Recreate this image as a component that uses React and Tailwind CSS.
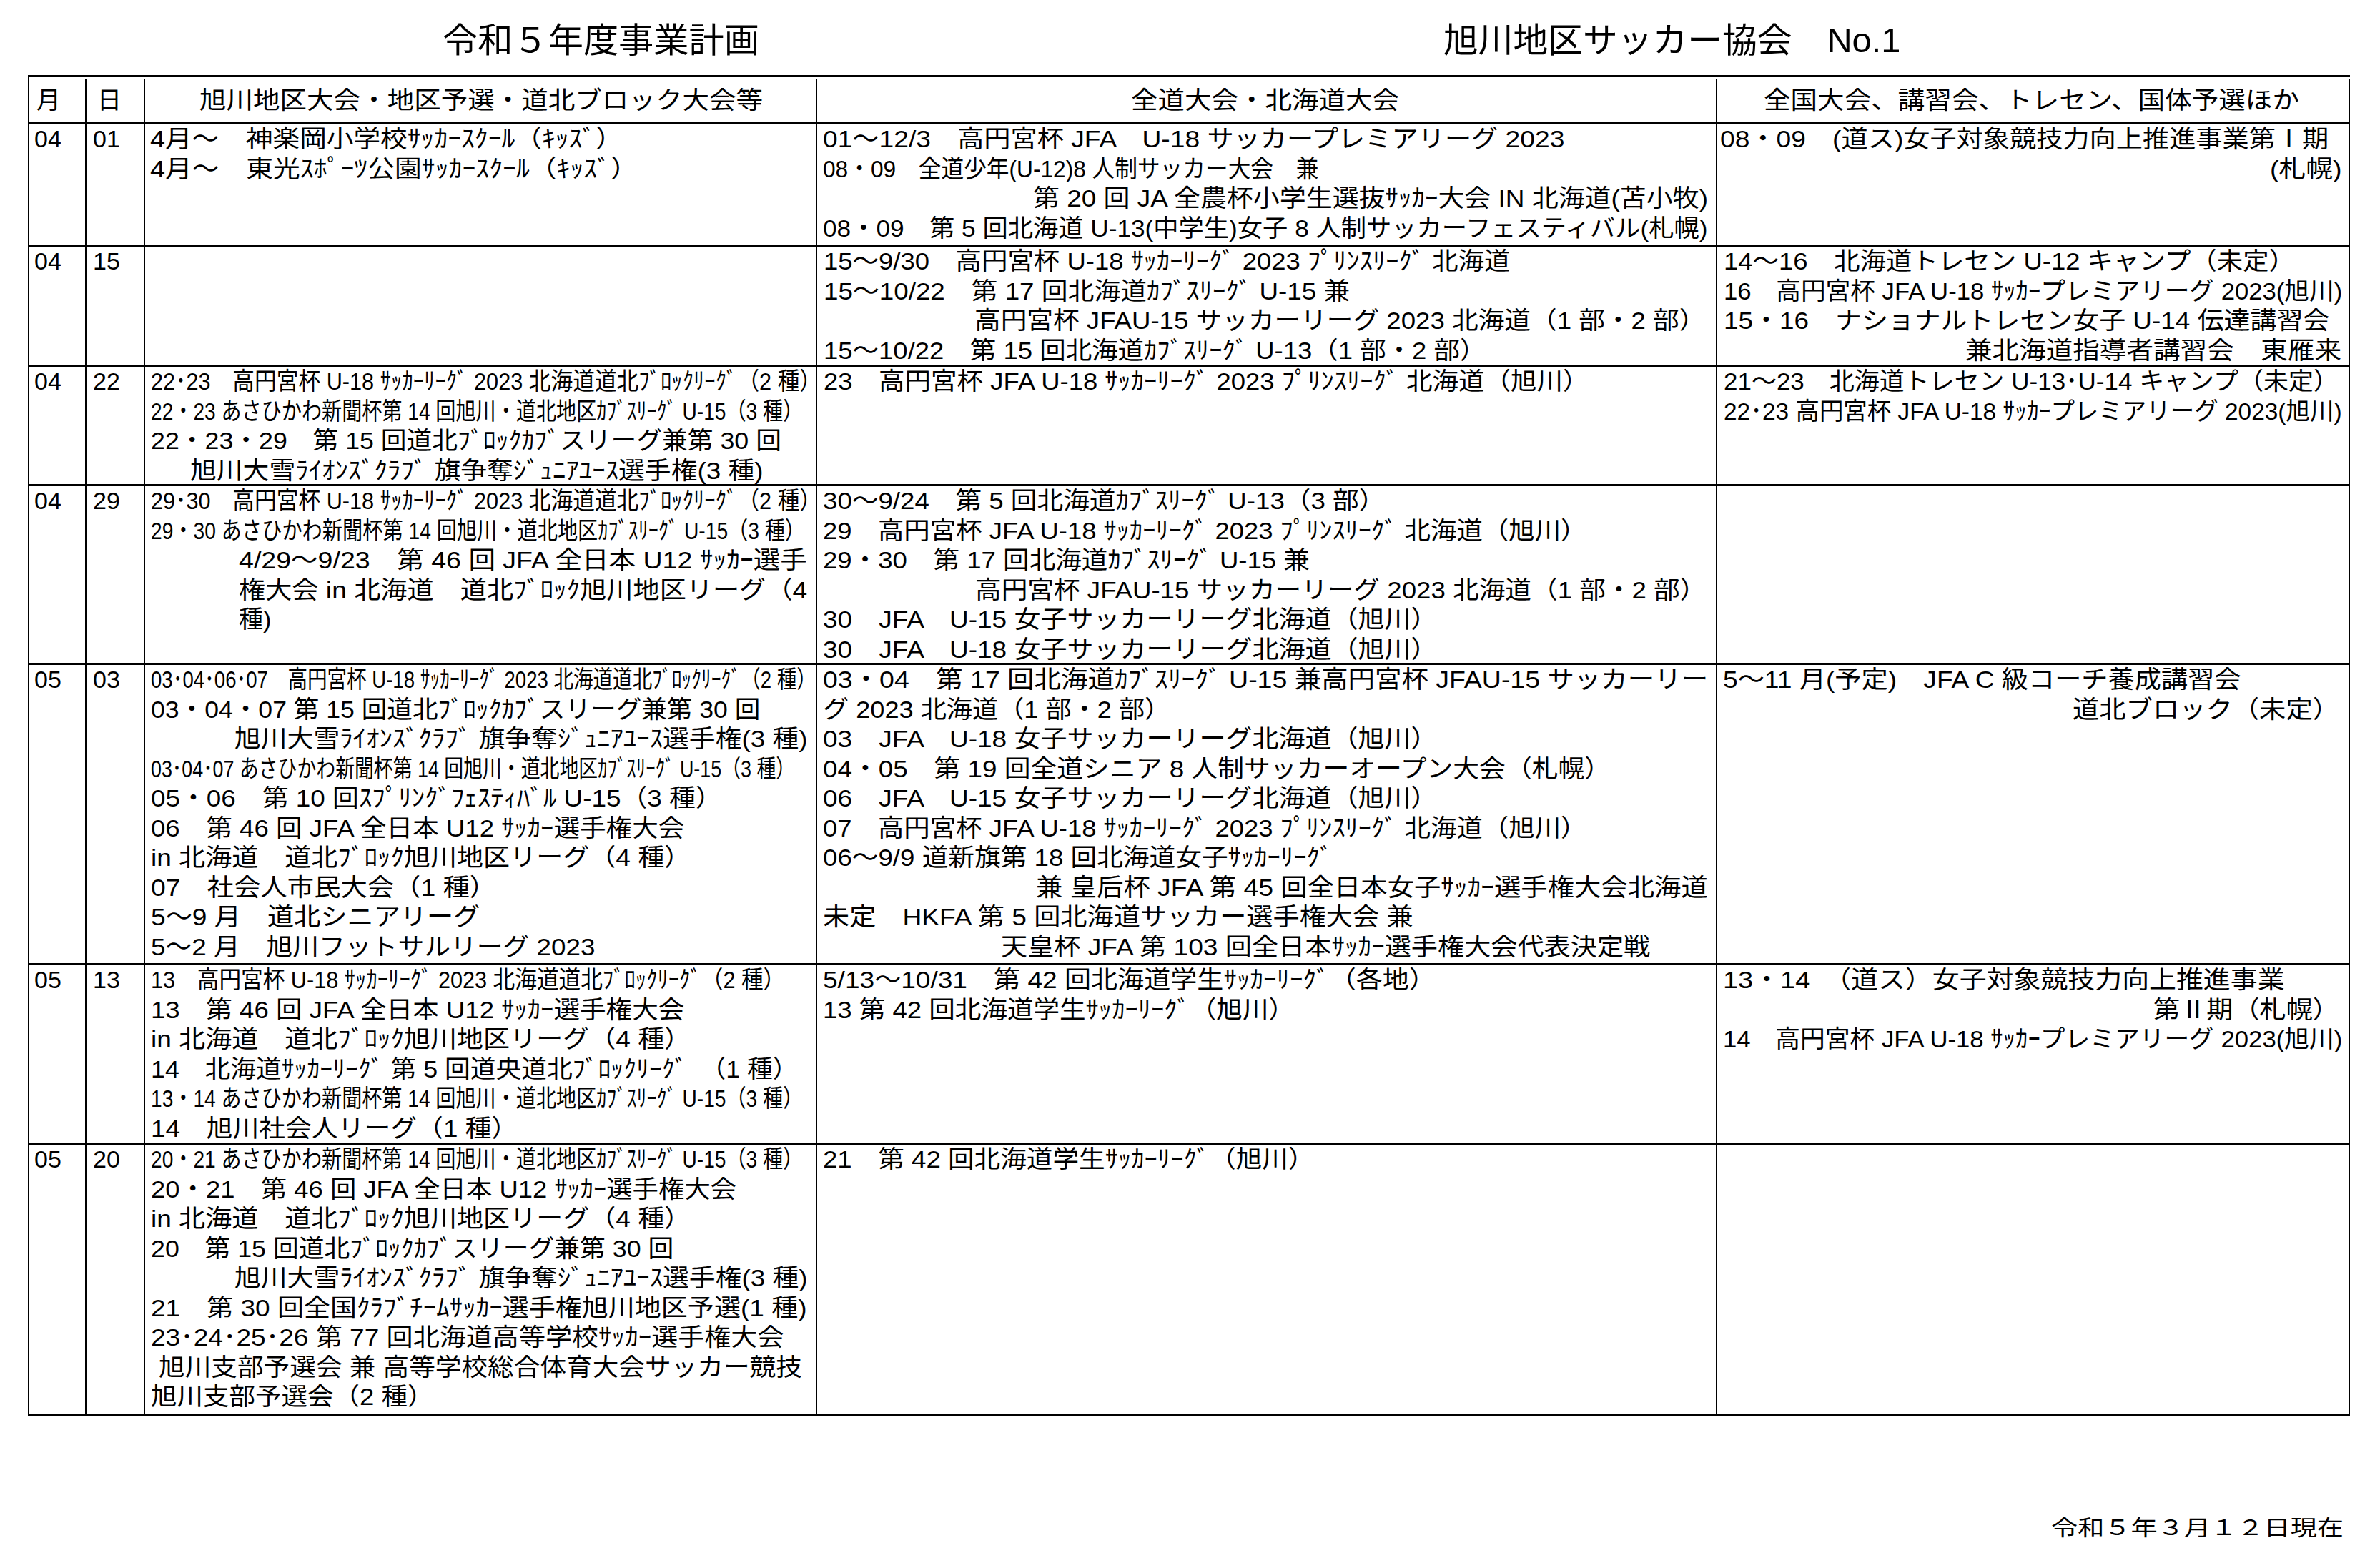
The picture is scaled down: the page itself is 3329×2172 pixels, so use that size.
import React, { useLayoutEffect, useRef, useState } from "react";

function Fit({ w, text, className = "" }) {
  const ref = useRef(null);
  const [s, setS] = useState(1);
  useLayoutEffect(() => {
    if (!w) return;
    const m = () => {
      const n = ref.current ? ref.current.offsetWidth : 0;
      if (n) setS(w / n);
    };
    m();
    if (document.fonts && document.fonts.ready) document.fonts.ready.then(m);
  }, [w, text]);
  return (
    <span
      ref={ref}
      className={"inline-block whitespace-nowrap origin-left " + className}
      style={{ transform: `scaleX(${s})` }}
    >
      {text}
    </span>
  );
}

function Line({ x0, x1, text, left }) {
  let w = null;
  if (x1 != null) {
    w = x1 - x0 + 2;
    if (text.endsWith("）")) w += 16;
  }
  return (
    <div
      className="h-[41.5px] leading-[41.5px] whitespace-nowrap"
      style={{ paddingLeft: x0 - left - 2 }}
    >
      <Fit w={w} text={text} />
    </div>
  );
}

const C3 = 203;
const C4 = 1143;
const C5 = 2402;

const rows = [
  {
    h: "h-[171px]",
    m: "04",
    d: "01",
    c3: [
      [212, 855, "4月～　神楽岡小学校ｻｯｶｰｽｸｰﾙ（ｷｯｽﾞ）"],
      [212, 876, "4月～　東光ｽﾎﾟｰﾂ公園ｻｯｶｰｽｸｰﾙ（ｷｯｽﾞ）"],
    ],
    c4: [
      [1153, 2188, "01～12/3　高円宮杯 JFA　U-18 サッカープレミアリーグ 2023"],
      [1153, 1844, "08・09　全道少年(U-12)8 人制サッカー大会　兼"],
      [1447, 2389, "第 20 回 JA 全農杯小学生選抜ｻｯｶｰ大会 IN 北海道(苫小牧)"],
      [1153, 2389, "08・09　第 5 回北海道 U-13(中学生)女子 8 人制サッカーフェスティバル(札幌)"],
    ],
    c5: [
      [2408, 3257, "08・09　(道ス)女子対象競技力向上推進事業第Ⅰ期"],
      [3177, 3276, "(札幌)"],
    ],
  },
  {
    h: "h-[168px]",
    m: "04",
    d: "15",
    c3: [],
    c4: [
      [1154, 2113, "15～9/30　高円宮杯 U-18 ｻｯｶｰﾘｰｸﾞ 2023 ﾌﾟﾘﾝｽﾘｰｸﾞ 北海道"],
      [1154, 1888, "15～10/22　第 17 回北海道ｶﾌﾞｽﾘｰｸﾞ U-15 兼"],
      [1365, 2369, "高円宮杯 JFAU-15 サッカーリーグ 2023 北海道（1 部・2 部）"],
      [1154, 2062, "15～10/22　第 15 回北海道ｶﾌﾞｽﾘｰｸﾞ U-13（1 部・2 部）"],
    ],
    c5: [
      [2413, 3194, "14～16　北海道トレセン U-12 キャンプ（未定）"],
      [2413, 3276, "16　高円宮杯 JFA U-18 ｻｯｶｰプレミアリーグ 2023(旭川)"],
      [2413, 3258, "15・16　ナショナルトレセン女子 U-14 伝達講習会"],
      [2751, 3275, "兼北海道指導者講習会　東雁来"],
    ],
  },
  {
    h: "h-[167px]",
    m: "04",
    d: "22",
    c3: [
      [213, 1133, "22･23　高円宮杯 U-18 ｻｯｶｰﾘｰｸﾞ 2023 北海道道北ﾌﾞﾛｯｸﾘｰｸﾞ（2 種）"],
      [213, 1107, "22・23 あさひかわ新聞杯第 14 回旭川・道北地区ｶﾌﾞｽﾘｰｸﾞ U-15（3 種）"],
      [213, 1093, "22・23・29　第 15 回道北ﾌﾞﾛｯｸｶﾌﾞスリーグ兼第 30 回"],
      [268, 1067, "旭川大雪ﾗｲｵﾝｽﾞｸﾗﾌﾞ 旗争奪ｼﾞｭﾆｱﾕｰｽ選手権(3 種)"],
    ],
    c4: [[1154, 2207, "23　高円宮杯 JFA U-18 ｻｯｶｰﾘｰｸﾞ 2023 ﾌﾟﾘﾝｽﾘｰｸﾞ 北海道（旭川）"]],
    c5: [
      [2413, 3255, "21～23　北海道トレセン U-13･U-14 キャンプ（未定）"],
      [2413, 3276, "22･23 高円宮杯 JFA U-18 ｻｯｶｰプレミアリーグ 2023(旭川)"],
    ],
  },
  {
    h: "h-[250px]",
    m: "04",
    d: "29",
    c3: [
      [213, 1133, "29･30　高円宮杯 U-18 ｻｯｶｰﾘｰｸﾞ 2023 北海道道北ﾌﾞﾛｯｸﾘｰｸﾞ（2 種）"],
      [213, 1110, "29・30 あさひかわ新聞杯第 14 回旭川・道北地区ｶﾌﾞｽﾘｰｸﾞ U-15（3 種）"],
      [336, 1129, "4/29～9/23　第 46 回 JFA 全日本 U12 ｻｯｶｰ選手"],
      [336, 1129, "権大会 in 北海道　道北ﾌﾞﾛｯｸ旭川地区リーグ（4"],
      [336, null, "種)"],
    ],
    c4: [
      [1153, 1921, "30～9/24　第 5 回北海道ｶﾌﾞｽﾘｰｸﾞ U-13（3 部）"],
      [1153, 2204, "29　高円宮杯 JFA U-18 ｻｯｶｰﾘｰｸﾞ 2023 ﾌﾟﾘﾝｽﾘｰｸﾞ 北海道（旭川）"],
      [1153, 1832, "29・30　第 17 回北海道ｶﾌﾞｽﾘｰｸﾞ U-15 兼"],
      [1366, 2370, "高円宮杯 JFAU-15 サッカーリーグ 2023 北海道（1 部・2 部）"],
      [1153, 1995, "30　JFA　U-15 女子サッカーリーグ北海道（旭川）"],
      [1153, 1995, "30　JFA　U-18 女子サッカーリーグ北海道（旭川）"],
    ],
    c5: [],
  },
  {
    h: "h-[420px]",
    m: "05",
    d: "03",
    c3: [
      [213, 1126, "03･04･06･07　高円宮杯 U-18 ｻｯｶｰﾘｰｸﾞ 2023 北海道道北ﾌﾞﾛｯｸﾘｰｸﾞ（2 種）"],
      [213, 1063, "03・04・07 第 15 回道北ﾌﾞﾛｯｸｶﾌﾞスリーグ兼第 30 回"],
      [330, 1129, "旭川大雪ﾗｲｵﾝｽﾞｸﾗﾌﾞ 旗争奪ｼﾞｭﾆｱﾕｰｽ選手権(3 種)"],
      [213, 1096, "03･04･07 あさひかわ新聞杯第 14 回旭川・道北地区ｶﾌﾞｽﾘｰｸﾞ U-15（3 種）"],
      [213, 994, "05・06　第 10 回ｽﾌﾟﾘﾝｸﾞﾌｪｽﾃｨﾊﾞﾙ U-15（3 種）"],
      [213, 957, "06　第 46 回 JFA 全日本 U12 ｻｯｶｰ選手権大会"],
      [213, 950, "in 北海道　道北ﾌﾞﾛｯｸ旭川地区リーグ（4 種）"],
      [213, 678, "07　社会人市民大会（1 種）"],
      [213, 671, "5～9 月　道北シニアリーグ"],
      [213, 832, "5～2 月　旭川フットサルリーグ 2023"],
    ],
    c4: [
      [1153, 2389, "03・04　第 17 回北海道ｶﾌﾞｽﾘｰｸﾞ U-15 兼高円宮杯 JFAU-15 サッカーリー"],
      [1153, 1621, "グ 2023 北海道（1 部・2 部）"],
      [1153, 1995, "03　JFA　U-18 女子サッカーリーグ北海道（旭川）"],
      [1153, 2237, "04・05　第 19 回全道シニア 8 人制サッカーオープン大会（札幌）"],
      [1153, 1995, "06　JFA　U-15 女子サッカーリーグ北海道（旭川）"],
      [1153, 2204, "07　高円宮杯 JFA U-18 ｻｯｶｰﾘｰｸﾞ 2023 ﾌﾟﾘﾝｽﾘｰｸﾞ 北海道（旭川）"],
      [1153, 1864, "06～9/9 道新旗第 18 回北海道女子ｻｯｶｰﾘｰｸﾞ"],
      [1451, 2389, "兼 皇后杯 JFA 第 45 回全日本女子ｻｯｶｰ選手権大会北海道"],
      [1153, 1977, "未定　HKFA 第 5 回北海道サッカー選手権大会 兼"],
      [1402, 2308, "天皇杯 JFA 第 103 回全日本ｻｯｶｰ選手権大会代表決定戦"],
    ],
    c5: [
      [2412, 3134, "5～11 月(予定)　JFA C 級コーチ養成講習会"],
      [2901, 3256, "道北ブロック（未定）"],
    ],
  },
  {
    h: "h-[251px]",
    m: "05",
    d: "13",
    c3: [
      [213, 1082, "13　高円宮杯 U-18 ｻｯｶｰﾘｰｸﾞ 2023 北海道道北ﾌﾞﾛｯｸﾘｰｸﾞ（2 種）"],
      [213, 957, "13　第 46 回 JFA 全日本 U12 ｻｯｶｰ選手権大会"],
      [213, 950, "in 北海道　道北ﾌﾞﾛｯｸ旭川地区リーグ（4 種）"],
      [213, 1100, "14　北海道ｻｯｶｰﾘｰｸﾞ 第 5 回道央道北ﾌﾞﾛｯｸﾘｰｸﾞ　（1 種）"],
      [213, 1107, "13・14 あさひかわ新聞杯第 14 回旭川・道北地区ｶﾌﾞｽﾘｰｸﾞ U-15（3 種）"],
      [213, 708, "14　旭川社会人リーグ（1 種）"],
    ],
    c4: [
      [1153, 1992, "5/13～10/31　第 42 回北海道学生ｻｯｶｰﾘｰｸﾞ（各地）"],
      [1153, 1795, "13 第 42 回北海道学生ｻｯｶｰﾘｰｸﾞ（旭川）"],
    ],
    c5: [
      [2412, 3196, "13・14　（道ス）女子対象競技力向上推進事業"],
      [3014, 3256, "第Ⅱ期（札幌）"],
      [2412, 3276, "14　高円宮杯 JFA U-18 ｻｯｶｰプレミアリーグ 2023(旭川)"],
    ],
  },
  {
    h: "h-[380px]",
    m: "05",
    d: "20",
    c3: [
      [213, 1107, "20・21 あさひかわ新聞杯第 14 回旭川・道北地区ｶﾌﾞｽﾘｰｸﾞ U-15（3 種）"],
      [213, 1030, "20・21　第 46 回 JFA 全日本 U12 ｻｯｶｰ選手権大会"],
      [213, 950, "in 北海道　道北ﾌﾞﾛｯｸ旭川地区リーグ（4 種）"],
      [213, 942, "20　第 15 回道北ﾌﾞﾛｯｸｶﾌﾞスリーグ兼第 30 回"],
      [330, 1129, "旭川大雪ﾗｲｵﾝｽﾞｸﾗﾌﾞ 旗争奪ｼﾞｭﾆｱﾕｰｽ選手権(3 種)"],
      [213, 1129, "21　第 30 回全国ｸﾗﾌﾞﾁｰﾑｻｯｶｰ選手権旭川地区予選(1 種)"],
      [213, 1096, "23･24･25･26 第 77 回北海道高等学校ｻｯｶｰ選手権大会"],
      [224, 1122, "旭川支部予選会 兼 高等学校総合体育大会サッカー競技"],
      [213, 590, "旭川支部予選会（2 種）"],
    ],
    c4: [[1153, 1823, "21　第 42 回北海道学生ｻｯｶｰﾘｰｸﾞ（旭川）"]],
    c5: [],
  },
];

function Cell({ lines, left }) {
  return (
    <div className="border-r-2 border-black">
      {lines.map((l, i) => (
        <Line key={i} x0={l[0]} x1={l[1]} text={l[2]} left={left} />
      ))}
    </div>
  );
}

export default function App() {
  return (
    <div className="w-[3329px] h-[2172px] bg-white text-black overflow-hidden font-['Liberation_Sans','Noto_Sans_CJK_JP','Noto_Sans_CJK_SC',sans-serif] font-normal text-[34px]">
      <div className="flex h-[105px] pt-[27px] text-[48px] leading-[60px]">
        <div className="w-[1400px] pl-[619px]">
          <Fit w={443} text="令和５年度事業計画" />
        </div>
        <div className="pl-[619px]">
          <Fit w={639} text="旭川地区サッカー協会　No.1" />
        </div>
      </div>

      <div className="ml-[39px] w-[3248px] border-l-2 border-t-[3px] border-black">
        <div className="grid grid-cols-[80px_82px_940px_1259px_885px] h-[66px] pt-[3px] border-b-[3px] border-black">
          <div className="border-r-2 border-black flex items-center pl-[10px] leading-[41.5px]">月</div>
          <div className="border-r-2 border-black flex items-center pl-[15px] leading-[41.5px]">日</div>
          <div className="border-r-2 border-black flex flex-col justify-center">
            <Line x0={281} x1={1067} text="旭川地区大会・地区予選・道北ブロック大会等" left={C3} />
          </div>
          <div className="border-r-2 border-black flex flex-col justify-center">
            <Line x0={1584} x1={1957} text="全道大会・北海道大会" left={C4} />
          </div>
          <div className="border-r-2 border-black flex flex-col justify-center">
            <Line x0={2469} x1={3216} text="全国大会、講習会、トレセン、国体予選ほか" left={C5} />
          </div>
        </div>

        {rows.map((r, i) => (
          <div
            key={i}
            className={"grid grid-cols-[80px_82px_940px_1259px_885px] border-b-[3px] border-black " + r.h}
          >
            <div className="border-r-2 border-black pl-[7px] leading-[41.5px]">{r.m}</div>
            <div className="border-r-2 border-black pl-[9px] leading-[41.5px]">{r.d}</div>
            <Cell lines={r.c3} left={C3} />
            <Cell lines={r.c4} left={C4} />
            <Cell lines={r.c5} left={C5} />
          </div>
        ))}
      </div>

      <div className="mt-[136px] pl-[2869px] text-[30px] leading-[40px]">
        <Fit w={409} text="令和５年３月１２日現在" />
      </div>
    </div>
  );
}
